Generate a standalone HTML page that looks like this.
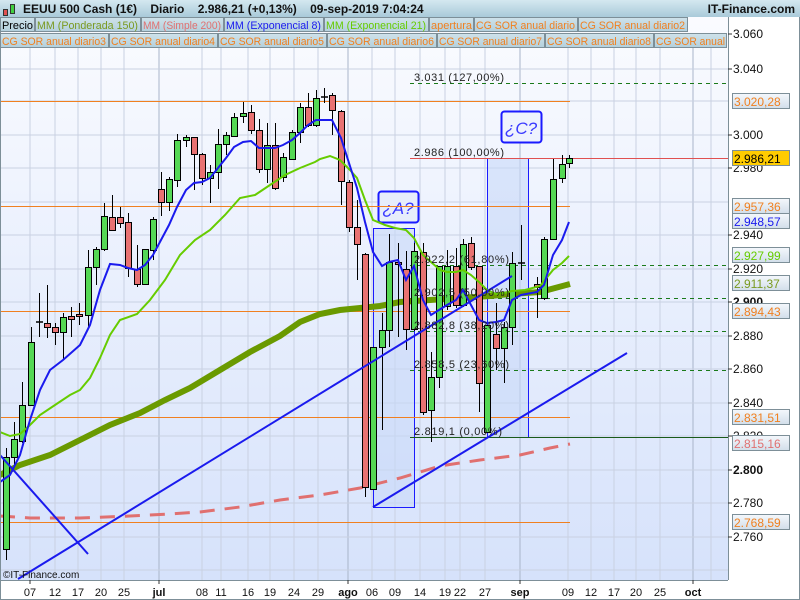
<!DOCTYPE html>
<html><head><meta charset="utf-8"><style>
html,body{margin:0;padding:0;width:800px;height:600px;overflow:hidden;background:#fff;font-family:"Liberation Sans",sans-serif}
</style></head><body>
<svg width="800" height="600" xmlns="http://www.w3.org/2000/svg" font-family="Liberation Sans, sans-serif">
<defs>
<linearGradient id="bg" x1="0" y1="0" x2="0" y2="1"><stop offset="0" stop-color="#fbfcff"/><stop offset="1" stop-color="#d6e2fb"/></linearGradient>
<linearGradient id="hd" x1="0" y1="0" x2="0" y2="1"><stop offset="0" stop-color="#d4e8f0"/><stop offset="1" stop-color="#a9cad9"/></linearGradient>
<linearGradient id="lg" x1="0" y1="0" x2="0" y2="1"><stop offset="0" stop-color="#cfe2ea"/><stop offset="1" stop-color="#b3d0dc"/></linearGradient>
<linearGradient id="bx" x1="0" y1="0" x2="0" y2="1"><stop offset="0" stop-color="#f4f8fc"/><stop offset="1" stop-color="#d2deea"/></linearGradient>
</defs>
<rect x="0" y="0" width="728" height="580" fill="url(#bg)"/>
<g stroke="#c9d1e2" stroke-width="1">
<line x1="30" y1="48" x2="30" y2="580"/><line x1="55" y1="48" x2="55" y2="580"/><line x1="78" y1="48" x2="78" y2="580"/><line x1="101" y1="48" x2="101" y2="580"/><line x1="124" y1="48" x2="124" y2="580"/><line x1="202" y1="48" x2="202" y2="580"/><line x1="221" y1="48" x2="221" y2="580"/><line x1="248" y1="48" x2="248" y2="580"/><line x1="270" y1="48" x2="270" y2="580"/><line x1="294" y1="48" x2="294" y2="580"/><line x1="318" y1="48" x2="318" y2="580"/><line x1="372" y1="48" x2="372" y2="580"/><line x1="395" y1="48" x2="395" y2="580"/><line x1="420" y1="48" x2="420" y2="580"/><line x1="445" y1="48" x2="445" y2="580"/><line x1="460" y1="48" x2="460" y2="580"/><line x1="485" y1="48" x2="485" y2="580"/><line x1="568" y1="48" x2="568" y2="580"/><line x1="591" y1="48" x2="591" y2="580"/><line x1="614" y1="48" x2="614" y2="580"/><line x1="636" y1="48" x2="636" y2="580"/><line x1="660" y1="48" x2="660" y2="580"/><line x1="711" y1="48" x2="711" y2="580"/>
</g>
<g stroke="#a9b5ca" stroke-width="1">
<line x1="159" y1="48" x2="159" y2="580"/><line x1="348" y1="48" x2="348" y2="580"/><line x1="520" y1="48" x2="520" y2="580"/><line x1="693" y1="48" x2="693" y2="580"/>
</g>
<g stroke="#c9d1e2" stroke-width="1">
<line x1="0" y1="69" x2="728" y2="69"/><line x1="0" y1="101" x2="728" y2="101"/><line x1="0" y1="135" x2="728" y2="135"/><line x1="0" y1="168" x2="728" y2="168"/><line x1="0" y1="202" x2="728" y2="202"/><line x1="0" y1="235" x2="728" y2="235"/><line x1="0" y1="269" x2="728" y2="269"/><line x1="0" y1="302" x2="728" y2="302"/><line x1="0" y1="336" x2="728" y2="336"/><line x1="0" y1="369" x2="728" y2="369"/><line x1="0" y1="403" x2="728" y2="403"/><line x1="0" y1="436" x2="728" y2="436"/><line x1="0" y1="470" x2="728" y2="470"/><line x1="0" y1="503" x2="728" y2="503"/><line x1="0" y1="537" x2="728" y2="537"/><line x1="0" y1="570" x2="728" y2="570"/>
</g>
<rect x="373.5" y="228.5" width="41" height="279" fill="#c8d8f8" fill-opacity="0.6" stroke="#1a1aff" stroke-width="1"/>
<rect x="487.5" y="158.5" width="41" height="279" fill="#c8d8f8" fill-opacity="0.6" stroke="#1a1aff" stroke-width="1"/>
<rect x="378.5" y="191.5" width="40" height="31" rx="3" fill="#e6edfb" stroke="#1a1aff" stroke-width="2"/>
<text x="398" y="214" font-size="17" fill="#3a3aff" text-anchor="middle" font-style="italic">¿A?</text>
<rect x="501.5" y="111.5" width="40" height="31" rx="3" fill="#eef2fd" stroke="#1a1aff" stroke-width="2"/>
<text x="521" y="134" font-size="17" fill="#3a3aff" text-anchor="middle" font-style="italic">¿C?</text>
<g stroke="#f08020" stroke-width="1">
<line x1="0" y1="101.5" x2="570" y2="101.5"/><line x1="0" y1="206.5" x2="570" y2="206.5"/><line x1="0" y1="311.5" x2="570" y2="311.5"/><line x1="0" y1="417.5" x2="570" y2="417.5"/><line x1="0" y1="522.5" x2="570" y2="522.5"/>
</g>
<g stroke="#1a7a1a" stroke-width="1" stroke-dasharray="4,4">
<line x1="410" y1="83.5" x2="728" y2="83.5"/><line x1="410" y1="265.5" x2="728" y2="265.5"/><line x1="410" y1="298.5" x2="728" y2="298.5"/><line x1="410" y1="331.5" x2="728" y2="331.5"/><line x1="410" y1="370.5" x2="728" y2="370.5"/>
</g>
<line x1="410" y1="158.5" x2="728" y2="158.5" stroke="#e05050"/>
<line x1="410" y1="437.5" x2="728" y2="437.5" stroke="#1a5a1a"/>
<polyline fill="none" stroke="#e07070" stroke-width="3" stroke-dasharray="15,10" points="0,516 30,518 80,518 130,516 170,514 200,512 240,507 280,500 320,495 360,488 400,478 440,466 480,460 520,455 550,448 570,444"/>
<polyline fill="none" stroke="#6a9a00" stroke-width="6" points="0,475 20,465 50,455 80,440 110,425 140,413 165,400 190,388 220,370 250,352 280,336 300,322 320,314 340,310 360,308 380,306 400,302 430,300 460,298 490,296 510,294 540,292 570,284"/>
<g stroke="#000" stroke-width="1">
<line x1="6.5" y1="448" x2="6.5" y2="560"/><line x1="14.5" y1="422" x2="14.5" y2="467"/><line x1="22.5" y1="382" x2="22.5" y2="443"/><line x1="31.5" y1="327" x2="31.5" y2="405"/><line x1="39.5" y1="293" x2="39.5" y2="337"/><line x1="47.5" y1="285" x2="47.5" y2="338"/><line x1="55.5" y1="323" x2="55.5" y2="345"/><line x1="63.5" y1="313" x2="63.5" y2="360"/><line x1="71.5" y1="307" x2="71.5" y2="337"/><line x1="79.5" y1="303" x2="79.5" y2="325"/><line x1="88.5" y1="250" x2="88.5" y2="327"/><line x1="96.5" y1="247" x2="96.5" y2="285"/><line x1="104.5" y1="203" x2="104.5" y2="251"/><line x1="112.5" y1="195" x2="112.5" y2="231"/><line x1="120.5" y1="207" x2="120.5" y2="228"/><line x1="128.5" y1="213" x2="128.5" y2="277"/><line x1="137.5" y1="245" x2="137.5" y2="287"/><line x1="153.5" y1="217" x2="153.5" y2="260"/><line x1="161.5" y1="172" x2="161.5" y2="216"/><line x1="169.5" y1="177" x2="169.5" y2="211"/><line x1="177.5" y1="134" x2="177.5" y2="187"/><line x1="186.5" y1="135" x2="186.5" y2="147"/><line x1="194.5" y1="137" x2="194.5" y2="190"/><line x1="202.5" y1="153" x2="202.5" y2="185"/><line x1="210.5" y1="165" x2="210.5" y2="203"/><line x1="218.5" y1="129" x2="218.5" y2="189"/><line x1="226.5" y1="132" x2="226.5" y2="155"/><line x1="234.5" y1="113" x2="234.5" y2="137"/><line x1="243.5" y1="102" x2="243.5" y2="123"/><line x1="251.5" y1="105" x2="251.5" y2="134"/><line x1="259.5" y1="119" x2="259.5" y2="173"/><line x1="267.5" y1="123" x2="267.5" y2="183"/><line x1="275.5" y1="123" x2="275.5" y2="190"/><line x1="283.5" y1="153" x2="283.5" y2="182"/><line x1="292.5" y1="130" x2="292.5" y2="160"/><line x1="300.5" y1="103" x2="300.5" y2="143"/><line x1="308.5" y1="93" x2="308.5" y2="127"/><line x1="316.5" y1="90" x2="316.5" y2="127"/><line x1="324.5" y1="88" x2="324.5" y2="103"/><line x1="332.5" y1="93" x2="332.5" y2="135"/><line x1="341.5" y1="110" x2="341.5" y2="205"/><line x1="349.5" y1="180" x2="349.5" y2="232"/><line x1="357.5" y1="200" x2="357.5" y2="280"/><line x1="365.5" y1="253" x2="365.5" y2="497"/><line x1="382.5" y1="313" x2="382.5" y2="430"/><line x1="389.5" y1="234" x2="389.5" y2="347"/><line x1="398.5" y1="243" x2="398.5" y2="337"/><line x1="406.5" y1="251" x2="406.5" y2="350"/><line x1="414.5" y1="243" x2="414.5" y2="331"/><line x1="423.5" y1="243" x2="423.5" y2="415"/><line x1="431.5" y1="352" x2="431.5" y2="442"/><line x1="439.5" y1="266" x2="439.5" y2="388"/><line x1="447.5" y1="250" x2="447.5" y2="310"/><line x1="456.5" y1="248" x2="456.5" y2="308"/><line x1="463.5" y1="239" x2="463.5" y2="307"/><line x1="471.5" y1="237" x2="471.5" y2="270"/><line x1="479.5" y1="267" x2="479.5" y2="412"/><line x1="496.5" y1="303" x2="496.5" y2="370"/><line x1="504.5" y1="322" x2="504.5" y2="383"/><line x1="512.5" y1="252" x2="512.5" y2="345"/><line x1="521.5" y1="225" x2="521.5" y2="280"/><line x1="537.5" y1="277" x2="537.5" y2="318"/><line x1="544.5" y1="237" x2="544.5" y2="300"/><line x1="553.5" y1="159" x2="553.5" y2="240"/><line x1="562.5" y1="155" x2="562.5" y2="183"/><line x1="569.5" y1="155" x2="569.5" y2="168"/>
</g>
<g stroke="#000" stroke-width="1" fill="#55d855">
<rect x="3.5" y="457.5" width="6" height="92"/><rect x="11.5" y="439.5" width="6" height="18"/><rect x="19.5" y="405.5" width="6" height="36"/><rect x="28.5" y="342.5" width="6" height="63"/><rect x="60.5" y="317.5" width="6" height="15"/><rect x="85.5" y="267.5" width="6" height="48"/><rect x="93.5" y="249.5" width="6" height="18"/><rect x="101.5" y="216.5" width="6" height="33"/><rect x="142.5" y="249.5" width="6" height="35"/><rect x="150.5" y="219.5" width="6" height="31"/><rect x="166.5" y="179.5" width="6" height="23"/><rect x="174.5" y="140.5" width="6" height="40"/><rect x="183.5" y="137.5" width="6" height="3"/><rect x="207.5" y="172.5" width="6" height="6"/><rect x="215.5" y="144.5" width="6" height="28"/><rect x="223.5" y="135.5" width="6" height="9"/><rect x="231.5" y="117.5" width="6" height="19"/><rect x="240.5" y="113.5" width="6" height="3"/><rect x="264.5" y="145.5" width="6" height="24"/><rect x="280.5" y="157.5" width="6" height="20"/><rect x="289.5" y="132.5" width="6" height="27"/><rect x="297.5" y="107.5" width="6" height="25"/><rect x="313.5" y="98.5" width="6" height="27"/><rect x="370.5" y="347.5" width="6" height="142"/><rect x="379.5" y="330.5" width="6" height="17"/><rect x="386.5" y="262.5" width="6" height="68"/><rect x="411.5" y="251.5" width="6" height="78"/><rect x="428.5" y="377.5" width="6" height="33"/><rect x="436.5" y="266.5" width="6" height="111"/><rect x="444.5" y="266.5" width="6" height="40"/><rect x="460.5" y="244.5" width="6" height="61"/><rect x="484.5" y="325.5" width="6" height="107"/><rect x="501.5" y="327.5" width="6" height="21"/><rect x="509.5" y="263.5" width="6" height="64"/><rect x="541.5" y="239.5" width="6" height="59"/><rect x="550.5" y="179.5" width="6" height="60"/><rect x="559.5" y="164.5" width="6" height="14"/><rect x="566.5" y="158.5" width="6" height="5"/>
</g>
<g stroke="#000" stroke-width="1" fill="#e87272">
<rect x="44.5" y="323.5" width="6" height="4"/><rect x="52.5" y="327.5" width="6" height="5"/><rect x="68.5" y="316.5" width="6" height="3"/><rect x="76.5" y="314.5" width="6" height="2"/><rect x="109.5" y="217.5" width="6" height="13"/><rect x="117.5" y="217.5" width="6" height="6"/><rect x="125.5" y="222.5" width="6" height="46"/><rect x="134.5" y="269.5" width="6" height="15"/><rect x="158.5" y="189.5" width="6" height="13"/><rect x="191.5" y="137.5" width="6" height="17"/><rect x="199.5" y="154.5" width="6" height="24"/><rect x="248.5" y="112.5" width="6" height="18"/><rect x="256.5" y="130.5" width="6" height="39"/><rect x="272.5" y="145.5" width="6" height="43"/><rect x="305.5" y="107.5" width="6" height="18"/><rect x="329.5" y="95.5" width="6" height="15"/><rect x="338.5" y="111.5" width="6" height="70"/><rect x="346.5" y="182.5" width="6" height="45"/><rect x="354.5" y="227.5" width="6" height="17"/><rect x="362.5" y="254.5" width="6" height="233"/><rect x="395.5" y="262.5" width="6" height="2"/><rect x="403.5" y="269.5" width="6" height="60"/><rect x="420.5" y="252.5" width="6" height="160"/><rect x="453.5" y="266.5" width="6" height="39"/><rect x="468.5" y="243.5" width="6" height="24"/><rect x="476.5" y="266.5" width="6" height="117"/><rect x="493.5" y="334.5" width="6" height="14"/><rect x="534.5" y="284.5" width="6" height="3"/>
</g>
<g stroke="#000" stroke-width="1.5"><line x1="36" y1="322" x2="43" y2="322"/><line x1="321" y1="97" x2="328" y2="97"/><line x1="518" y1="263" x2="525" y2="263"/></g>
<polyline fill="none" stroke="#66cc00" stroke-width="2" points="0,432 10,436 20,434 30,425 40,415 55,405 70,395 80,390 90,378 100,358 110,335 120,320 137,314 150,300 165,280 180,255 195,240 210,230 225,215 240,198 255,195 270,185 285,175 300,168 315,162 320,159 330,156 340,160 350,170 357,178 365,200 373,220 385,225 395,228 406,230 414,238 423,255 431,262 440,270 447,272 456,272 463,270 471,275 479,282 487,290 496,294 504,293 512,291 525,290 540,286 553,270 562,263 569,256"/>
<polyline fill="none" stroke="#1a1aee" stroke-width="2" points="0,482 10,475 20,455 30,420 40,390 50,370 63,360 80,345 90,325 100,290 110,264 120,265 128,268 137,270 145,265 153,255 161,240 169,225 177,207 186,190 194,183 202,182 210,178 218,168 226,158 234,147 243,142 251,141 259,148 267,148 275,148 283,145 292,140 300,133 308,125 316,120 324,120 332,120 341,138 349,163 357,188 365,222 373,252 382,266 389,262 398,260 406,280 414,266 423,300 431,315 439,310 447,305 456,300 463,290 471,305 479,320 487,323 496,322 504,320 512,300 521,295 537,292 544,285 553,255 562,240 569,222"/>
<g stroke="#1a1aee" stroke-width="2">
<line x1="18" y1="579" x2="512" y2="276"/><line x1="373" y1="507" x2="627" y2="353"/><line x1="0" y1="455" x2="88" y2="554"/>
</g>
<g font-size="11" fill="#222">
<text x="414" y="81" textLength="90">3.031 (127,00%)</text><text x="414" y="156" textLength="90">2.986 (100,00%)</text><text x="414" y="263" textLength="95">2.922,2 (61,80%)</text><text x="414" y="296" textLength="95">2.902,5 (50,00%)</text><text x="414" y="329" textLength="95">2.882,8 (38,20%)</text><text x="414" y="368" textLength="95">2.858,5 (23,60%)</text><text x="414" y="435" textLength="88">2.819,1 (0,00%)</text>
</g>
<text x="3" y="578" font-size="10" fill="#111">©IT-Finance.com</text>
<rect x="0" y="0" width="800" height="17" fill="url(#hd)"/>
<rect x="3.5" y="9.5" width="4" height="6" fill="#e05050" stroke="#333" stroke-width="1"/><rect x="10.5" y="4.5" width="4" height="9" fill="#40d040" stroke="#333" stroke-width="1"/>
<text x="23" y="13" font-size="12" font-weight="bold" fill="#111" xml:space="preserve">EEUU 500 Cash (1€)    Diario    2.986,21 (+0,13%)    09-sep-2019 7:04:24</text>
<text x="795" y="13" font-size="12" font-weight="bold" fill="#111" text-anchor="end">IT-Finance.com</text>
<g stroke="#7d8f98" stroke-width="1" fill="url(#lg)">
<rect x="0.5" y="17.5" width="34" height="14"/><rect x="35.5" y="17.5" width="105" height="14"/><rect x="141.5" y="17.5" width="82" height="14"/><rect x="224.5" y="17.5" width="99" height="14"/><rect x="324.5" y="17.5" width="104" height="14"/><rect x="429.5" y="17.5" width="44" height="14"/><rect x="474.5" y="17.5" width="103" height="14"/><rect x="578.5" y="17.5" width="109" height="14"/>
<rect x="0.5" y="33.5" width="108" height="14"/><rect x="109.5" y="33.5" width="108" height="14"/><rect x="218.5" y="33.5" width="108" height="14"/><rect x="327.5" y="33.5" width="109" height="14"/><rect x="437.5" y="33.5" width="107" height="14"/><rect x="545.5" y="33.5" width="108" height="14"/><rect x="654.5" y="33.5" width="72" height="14"/>
</g>
<g font-size="11" lengthAdjust="spacingAndGlyphs">
<text x="2" y="29" fill="#000" textLength="31" lengthAdjust="spacingAndGlyphs">Precio</text>
<text x="37" y="29" fill="#7a9a20" textLength="101" lengthAdjust="spacingAndGlyphs">MM (Ponderada 150)</text>
<text x="143" y="29" fill="#e07070" textLength="78" lengthAdjust="spacingAndGlyphs">MM (Simple 200)</text>
<text x="226" y="29" fill="#1a1aee" textLength="95" lengthAdjust="spacingAndGlyphs">MM (Exponencial 8)</text>
<text x="326" y="29" fill="#66cc00" textLength="100" lengthAdjust="spacingAndGlyphs">MM (Exponencial 21)</text>
<text x="431" y="29" fill="#f08020" textLength="41" lengthAdjust="spacingAndGlyphs">apertura</text>
<text x="476" y="29" fill="#f08020" textLength="99" lengthAdjust="spacingAndGlyphs">CG SOR anual diario</text>
<text x="580" y="29" fill="#f08020" textLength="105" lengthAdjust="spacingAndGlyphs">CG SOR anual diario2</text>
<text x="2" y="45" fill="#f08020" textLength="104" lengthAdjust="spacingAndGlyphs">CG SOR anual diario3</text>
<text x="111" y="45" fill="#f08020" textLength="104" lengthAdjust="spacingAndGlyphs">CG SOR anual diario4</text>
<text x="220" y="45" fill="#f08020" textLength="104" lengthAdjust="spacingAndGlyphs">CG SOR anual diario5</text>
<text x="329" y="45" fill="#f08020" textLength="105" lengthAdjust="spacingAndGlyphs">CG SOR anual diario6</text>
<text x="439" y="45" fill="#f08020" textLength="103" lengthAdjust="spacingAndGlyphs">CG SOR anual diario7</text>
<text x="547" y="45" fill="#f08020" textLength="104" lengthAdjust="spacingAndGlyphs">CG SOR anual diario8</text>
<text x="656" y="45" fill="#f08020" textLength="69" lengthAdjust="spacingAndGlyphs">CG SOR anual</text>
</g>
<rect x="728" y="17" width="72" height="583" fill="#fff"/>
<line x1="728.5" y1="17" x2="728.5" y2="580" stroke="#7d8f98"/>
<rect x="0" y="580" width="800" height="20" fill="#fff"/>
<line x1="0" y1="580.5" x2="728" y2="580.5" stroke="#7d8f98"/>
<line x1="0" y1="599.5" x2="800" y2="599.5" stroke="#7d8f98"/>
<line x1="0.5" y1="17" x2="0.5" y2="600" stroke="#7d8f98"/>
<line x1="799.5" y1="17" x2="799.5" y2="600" stroke="#7d8f98"/>
<g stroke="#333"><line x1="728" y1="34" x2="732" y2="34"/><line x1="728" y1="69" x2="732" y2="69"/><line x1="728" y1="135" x2="732" y2="135"/><line x1="728" y1="168" x2="732" y2="168"/><line x1="728" y1="235" x2="732" y2="235"/><line x1="728" y1="269" x2="732" y2="269"/><line x1="728" y1="302" x2="732" y2="302"/><line x1="728" y1="336" x2="732" y2="336"/><line x1="728" y1="369" x2="732" y2="369"/><line x1="728" y1="403" x2="732" y2="403"/><line x1="728" y1="436" x2="732" y2="436"/><line x1="728" y1="470" x2="732" y2="470"/><line x1="728" y1="503" x2="732" y2="503"/><line x1="728" y1="537" x2="732" y2="537"/></g>
<g font-size="12" fill="#111">
<text x="733" y="38">3.060</text><text x="733" y="73">3.040</text><text x="733" y="139">3.000</text><text x="733" y="172">2.980</text><text x="733" y="239">2.940</text><text x="733" y="273">2.920</text><text x="733" y="306" font-weight="bold">2.900</text><text x="733" y="340">2.880</text><text x="733" y="373">2.860</text><text x="733" y="407">2.840</text><text x="733" y="440">2.820</text><text x="733" y="474" font-weight="bold">2.800</text><text x="733" y="507">2.780</text><text x="733" y="541">2.760</text>
</g>
<g stroke="#7d8f98" stroke-width="1" fill="url(#bx)">
<rect x="732.5" y="93.5" width="57" height="15"/><rect x="732.5" y="198.5" width="57" height="15"/><rect x="732.5" y="213.5" width="57" height="15"/><rect x="732.5" y="247.5" width="57" height="15"/><rect x="732.5" y="275.5" width="57" height="15"/><rect x="732.5" y="303.5" width="57" height="15"/><rect x="732.5" y="409.5" width="57" height="15"/><rect x="732.5" y="435.5" width="57" height="15"/><rect x="732.5" y="514.5" width="57" height="15"/>
</g>
<rect x="732.5" y="150.5" width="57" height="15" fill="#ffcc00" stroke="#7d8f98"/>
<g font-size="12">
<text x="734" y="106" fill="#f08020">3.020,28</text><text x="734" y="163" fill="#000">2.986,21</text><text x="734" y="211" fill="#f08020">2.957,36</text><text x="734" y="226" fill="#1a1aee">2.948,57</text><text x="734" y="260" fill="#66cc00">2.927,99</text><text x="734" y="288" fill="#7a9a20">2.911,37</text><text x="734" y="316" fill="#f08020">2.894,43</text><text x="734" y="422" fill="#f08020">2.831,51</text><text x="734" y="448" fill="#e07070">2.815,16</text><text x="734" y="527" fill="#f08020">2.768,59</text>
</g>
<g stroke="#333"><line x1="30" y1="580" x2="30" y2="584"/><line x1="159" y1="580" x2="159" y2="584"/><line x1="348" y1="580" x2="348" y2="584"/><line x1="520" y1="580" x2="520" y2="584"/><line x1="693" y1="580" x2="693" y2="584"/></g>
<g font-size="11" fill="#111" text-anchor="middle">
<text x="30" y="596">07</text><text x="55" y="596">12</text><text x="78" y="596">17</text><text x="101" y="596">20</text><text x="124" y="596">25</text><text x="159" y="596" font-weight="bold">jul</text><text x="202" y="596">08</text><text x="221" y="596">11</text><text x="248" y="596">16</text><text x="270" y="596">19</text><text x="294" y="596">24</text><text x="318" y="596">29</text><text x="348" y="596" font-weight="bold">ago</text><text x="372" y="596">06</text><text x="395" y="596">09</text><text x="420" y="596">14</text><text x="445" y="596">19</text><text x="460" y="596">22</text><text x="485" y="596">27</text><text x="520" y="596" font-weight="bold">sep</text><text x="568" y="596">09</text><text x="591" y="596">12</text><text x="614" y="596">17</text><text x="636" y="596">20</text><text x="660" y="596">25</text><text x="693" y="596" font-weight="bold">oct</text>
</g>
</svg>
</body></html>
